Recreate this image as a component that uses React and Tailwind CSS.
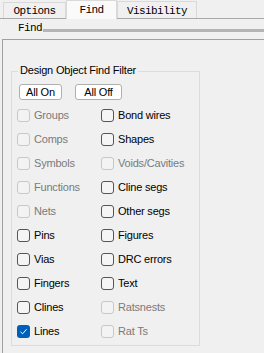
import React from "react";

const left = [
  ["Groups", "d"],
  ["Comps", "d"],
  ["Symbols", "d"],
  ["Functions", "d"],
  ["Nets", "d"],
  ["Pins", "e"],
  ["Vias", "e"],
  ["Fingers", "e"],
  ["Clines", "e"],
  ["Lines", "c"],
];
const right = [
  ["Bond wires", "e"],
  ["Shapes", "e"],
  ["Voids/Cavities", "d"],
  ["Cline segs", "e"],
  ["Other segs", "e"],
  ["Figures", "e"],
  ["DRC errors", "e"],
  ["Text", "e"],
  ["Ratsnests", "d"],
  ["Rat Ts", "d"],
];

function Box({ state }) {
  if (state === "c") {
    return (
      <div className="w-[13px] h-[13px] rounded-[3px] bg-[#005fb8] flex items-center justify-center shrink-0">
        <svg width="9" height="9" viewBox="0 0 9 9">
          <path d="M1.5 4.8 L3.6 6.8 L7.6 2.2" fill="none" stroke="white" strokeWidth="1" />
        </svg>
      </div>
    );
  }
  if (state === "d") {
    return <div className="w-[13px] h-[13px] rounded-[3px] border border-[#c8c8c8] bg-[#f3f3f3] shrink-0" />;
  }
  return <div className="w-[13px] h-[13px] rounded-[3px] border border-[#555555] bg-[#f5f5f5] shrink-0" />;
}

function Row({ label, state }) {
  return (
    <div className="h-[24px] flex items-center">
      <Box state={state} />
      <span
        className={
          "ml-[4px] text-[11px] leading-[13px] tracking-[-0.2px] " +
          (state === "d" ? "text-[#7a7a7a]" : "text-black")
        }
      >
        {label}
      </span>
    </div>
  );
}

export default function App() {
  const mono = "font-['Liberation_Mono',monospace] text-[11px] leading-[12px] tracking-[-0.6px] text-black";
  return (
    <div className="w-[264px] h-[353px] bg-[#f0f0f0] overflow-hidden font-['Liberation_Sans',Arial,sans-serif]">
      {/* tabs */}
      <div className="flex items-end h-[19px] pl-[3px] border-b border-[#a9a9a9]">
        <div className={"w-[63px] h-[16px] border border-b-0 border-[#d9d9d9] bg-[#f0f0f0] flex justify-center pt-[2px] " + mono}>
          Options
        </div>
        <div className={"relative z-10 -mb-px w-[51px] h-[19px] border-x border-t border-[#d9d9d9] bg-[#fafafa] flex justify-center pt-[3px] " + mono}>
          Find
        </div>
        <div className={"w-[80px] h-[17px] border border-b-0 border-[#d9d9d9] bg-[#f0f0f0] flex justify-center pt-[3px] " + mono}>
          Visibility
        </div>
      </div>

      {/* Find header */}
      <div className="flex items-start h-[20px]">
        <span className={"ml-[18px] mt-[3px] " + mono}>Find</span>
        <div className="flex-1 ml-[1px] mt-[10px] h-[3px] bg-[#b4b4b4]" />
      </div>

      {/* panel */}
      <div className="ml-[2px] h-[314px] border-l border-t border-[#a0a0a0] pl-[8px] pt-[31px]">
        <div className="relative w-[189px] h-[275px] border border-[#dcdcdc]">
          <span className="absolute left-[6px] top-[-8px] px-[2px] bg-[#f0f0f0] text-[11px] leading-[13px] tracking-[-0.2px] text-black">
            Design Object Find Filter
          </span>
          <div className="flex pl-[7px] pt-[12px] gap-[13px]">
            <div className="w-[43px] h-[16px] rounded-[3px] border border-[#b0b0b0] bg-white flex items-center justify-center text-[11px] leading-[13px] tracking-[-0.2px] text-black">
              All On
            </div>
            <div className="w-[47px] h-[16px] rounded-[3px] border border-[#b0b0b0] bg-white flex items-center justify-center text-[11px] leading-[13px] tracking-[-0.2px] text-black">
              All Off
            </div>
          </div>
          <div className="grid grid-cols-[84px_1fr] pl-[5px] mt-[3px]">
            <div className="flex flex-col">
              {left.map(([l, s]) => (
                <Row key={l} label={l} state={s} />
              ))}
            </div>
            <div className="flex flex-col">
              {right.map(([l, s]) => (
                <Row key={l} label={l} state={s} />
              ))}
            </div>
          </div>
        </div>
      </div>
    </div>
  );
}
